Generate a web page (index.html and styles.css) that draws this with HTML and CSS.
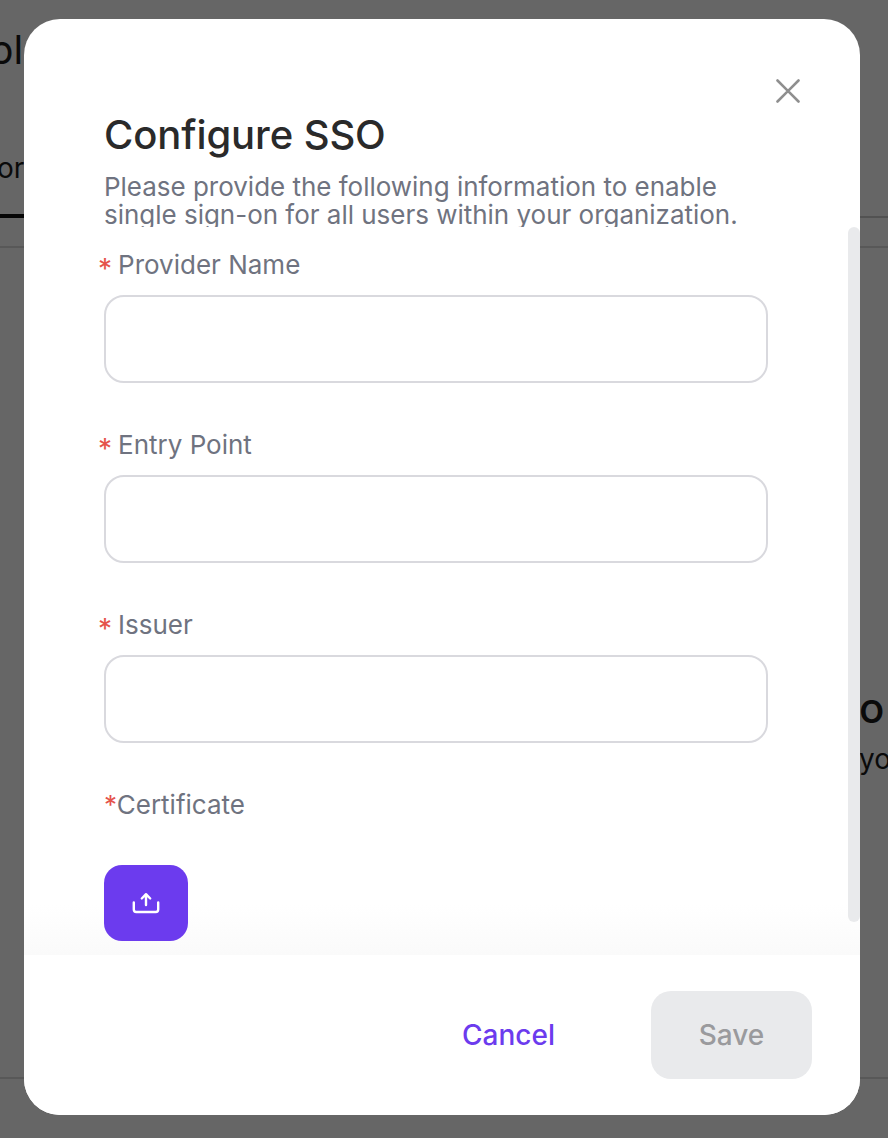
FILE: index.html
```html
<!DOCTYPE html>
<html lang="en">
<head>
    <meta charset="UTF-8">
    <meta name="viewport" content="width=device-width, initial-scale=1.0">
    <title>Configure SSO</title>
    <link rel="stylesheet" href="styles.css">
</head>
<body>
    <div class="page">
        <p class="page-title">bl</p>
        <div class="tabs">
            <span class="tab-active">or</span>
        </div>
        <div class="page-content">
            <p class="empty-title">o</p>
            <p class="empty-text">yo</p>
        </div>
        <div class="page-footer"></div>
    </div>

    <div class="overlay"></div>

    <div class="modal">
        <button class="close-btn" aria-label="Close">
            <svg width="24" height="24" viewBox="0 0 24 24" fill="none" stroke="#8f8f8f" stroke-width="2.6" stroke-linecap="round">
                <path d="M1.5 1.5L22.5 22.5M22.5 1.5L1.5 22.5"/>
            </svg>
        </button>

        <div class="modal-header">
            <h1>Configure SSO</h1>
            <p>Please provide the following information to enable single sign-on for all users within your organization.</p>
        </div>

        <div class="modal-body">
            <div class="fade"></div>
            <div class="scroll-track"></div>
            <div class="field">
                <label><span class="star">*</span>Provider Name</label>
                <input type="text">
            </div>
            <div class="field">
                <label><span class="star">*</span>Entry Point</label>
                <input type="text">
            </div>
            <div class="field">
                <label><span class="star">*</span>Issuer</label>
                <input type="text">
            </div>
            <div class="field-cert">
                <label><span class="star-tight">*</span>Certificate</label>
                <button class="upload-btn" aria-label="Upload">
                    <svg width="28" height="22" viewBox="0 0 28 22" fill="none" stroke="#fff" stroke-width="2.4" stroke-linecap="round" stroke-linejoin="round">
                        <path d="M14 13V2.5M9.8 6.5L14 2.2L18.2 6.5"/>
                        <path d="M1.8 10.5V17.5C1.8 19 2.8 20 4.3 20H23.7C25.2 20 26.2 19 26.2 17.5V10.5"/>
                    </svg>
                </button>
            </div>
        </div>

        <div class="modal-footer">
            <button class="cancel-btn">Cancel</button>
            <button class="save-btn" disabled>Save</button>
        </div>
    </div>
</body>
</html>
```

FILE: styles.css
```css
* {
    box-sizing: border-box;
}
body {
    margin: 0;
    font-family: 'Inter', 'Liberation Sans', sans-serif;
    background-color: white;
}
p, h1 {
    margin: 0;
}
.page {
    height: 1138px;
    overflow: hidden;
    color: #1a1a1a;
}
.page-title {
    padding-top: 26px;
    margin-left: -11px;
    font-size: 40px;
    line-height: 48px;
    height: 120px;
}
.tabs {
    height: 128px;
    display: flex;
    flex-direction: column;
    background: linear-gradient(#ccc, #ccc) right 0 top 96px / 28px 2px no-repeat;
    border-bottom: 2px solid #ddd;
}
.tab-active {
    width: 24px;
    height: 98px;
    font-size: 28px;
    line-height: 36px;
    padding-top: 30px;
    text-indent: -3px;
    border-bottom: 4px solid #111;
    overflow: hidden;
}
.page-content {
    height: 829px;
    padding-top: 436px;
    padding-left: 859px;
}
.empty-title {
    font-size: 42px;
    font-weight: 500;
    line-height: 48px;
}
.empty-text {
    margin-top: 9px;
    font-size: 28px;
    line-height: 36px;
    white-space: nowrap;
}
.page-footer {
    border-top: 2px solid #ddd;
}
.overlay {
    position: fixed;
    inset: 0;
    background-color: rgba(0, 0, 0, 0.6);
}
.modal {
    position: absolute;
    top: 19px;
    left: 24px;
    width: 836px;
    height: 1096px;
    display: flex;
    flex-direction: column;
    background-color: white;
    border-radius: 36px;
    overflow: hidden;
}
.close-btn {
    position: absolute;
    top: 60px;
    right: 60px;
    width: 24px;
    height: 24px;
    padding: 0;
    border: none;
    background: none;
}
.close-btn svg {
    display: block;
}
.modal-header {
    flex: none;
    height: 208px;
    padding: 92px 80px 0;
    overflow: hidden;
}
.modal-header h1 {
    font-size: 40px;
    font-weight: 500;
    line-height: 48px;
    letter-spacing: -0.1px;
    color: #2a2a2a;
}
.modal-header p {
    margin-top: 14px;
    width: 660px;
    font-size: 26px;
    line-height: 28px;
    letter-spacing: -0.02px;
    color: #6f7380;
}
.modal-body {
    flex: 1;
    position: relative;
    padding: 21px 92px 0 80px;
    overflow: hidden;
}
.scroll-track {
    position: absolute;
    top: 0;
    right: 0;
    width: 12px;
    height: 695px;
    background-color: #e9eaec;
    border-radius: 6px;
}
.field {
    height: 180px;
}
label {
    display: block;
    font-size: 26px;
    line-height: 34px;
    color: #6f7380;
}
.star {
    margin-left: -6px;
    margin-right: 6px;
    font-size: 28px;
    line-height: 0;
    vertical-align: -5px;
    color: #e5534b;
}
.star-tight {
    color: #e5534b;
}
input {
    display: block;
    width: 664px;
    height: 88px;
    margin-top: 13px;
    border: 2px solid #d9d9de;
    border-radius: 20px;
    background-color: white;
}
.upload-btn {
    position: relative;
    display: flex;
    align-items: center;
    justify-content: center;
    width: 84px;
    height: 76px;
    margin-top: 43px;
    padding: 0;
    border: none;
    background-color: #6c3bee;
    border-radius: 18px;
}
.fade {
    position: absolute;
    left: 0;
    right: 0;
    bottom: 0;
    height: 50px;
    background: linear-gradient(rgba(250, 250, 250, 0), #fafafa);
}
.modal-footer {
    flex: none;
    height: 160px;
    padding: 36px 48px 36px 0;
    display: flex;
    justify-content: flex-end;
    background-color: white;
}
.cancel-btn, .save-btn {
    height: 88px;
    border: none;
    font-family: inherit;
    font-size: 28px;
    font-weight: 500;
    background: none;
}
.cancel-btn {
    color: #6c3bee;
    margin-right: 96px;
    padding: 0;
}
.save-btn {
    width: 161px;
    color: #9a9a9d;
    background-color: #e9eaec;
    border-radius: 20px;
}
```
